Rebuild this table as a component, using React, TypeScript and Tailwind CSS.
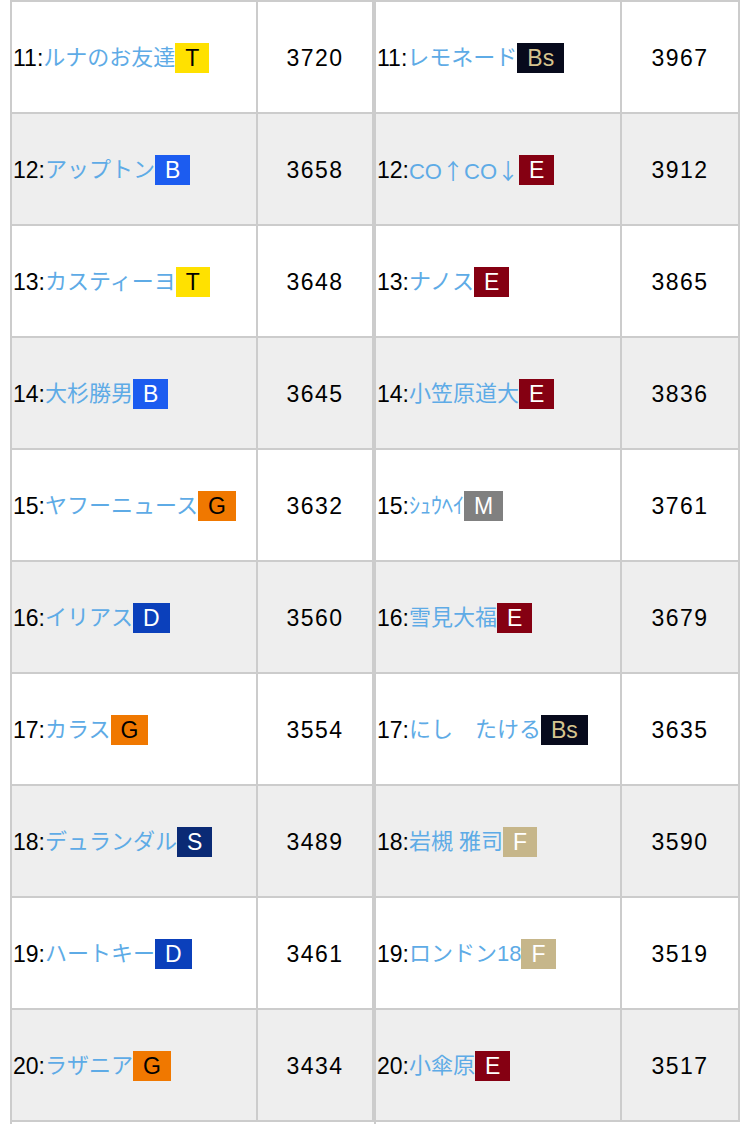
import React from 'react';

type Team = 'T' | 'Bs' | 'B' | 'E' | 'D' | 'G' | 'S' | 'M' | 'F';

interface Entry {
  rank: number;
  name: string;
  team: Team;
  score: number;
}

const TEAM_STYLES: Record<Team, string> = {
  T: 'bg-[#ffe100] text-black',
  Bs: 'bg-[#070a1c] text-[#d6c48f]',
  B: 'bg-[#1c5cf0] text-white',
  E: 'bg-[#850012] text-white',
  D: 'bg-[#0b40bb] text-white',
  G: 'bg-[#f07800] text-black',
  S: 'bg-[#0a2a75] text-white',
  M: 'bg-[#808080] text-white',
  F: 'bg-[#c6b68a] text-white',
};

const LEFT: Entry[] = [
  { rank: 11, name: 'ルナのお友達', team: 'T', score: 3720 },
  { rank: 12, name: 'アップトン', team: 'B', score: 3658 },
  { rank: 13, name: 'カスティーヨ', team: 'T', score: 3648 },
  { rank: 14, name: '大杉勝男', team: 'B', score: 3645 },
  { rank: 15, name: 'ヤフーニュース', team: 'G', score: 3632 },
  { rank: 16, name: 'イリアス', team: 'D', score: 3560 },
  { rank: 17, name: 'カラス', team: 'G', score: 3554 },
  { rank: 18, name: 'デュランダル', team: 'S', score: 3489 },
  { rank: 19, name: 'ハートキー', team: 'D', score: 3461 },
  { rank: 20, name: 'ラザニア', team: 'G', score: 3434 },
];

const RIGHT: Entry[] = [
  { rank: 11, name: 'レモネード', team: 'Bs', score: 3967 },
  { rank: 12, name: 'CO↑CO↓', team: 'E', score: 3912 },
  { rank: 13, name: 'ナノス', team: 'E', score: 3865 },
  { rank: 14, name: '小笠原道大', team: 'E', score: 3836 },
  { rank: 15, name: 'ｼｭｳﾍｲ', team: 'M', score: 3761 },
  { rank: 16, name: '雪見大福', team: 'E', score: 3679 },
  { rank: 17, name: 'にし　たける', team: 'Bs', score: 3635 },
  { rank: 18, name: '岩槻 雅司', team: 'F', score: 3590 },
  { rank: 19, name: 'ロンドン18', team: 'F', score: 3519 },
  { rank: 20, name: '小傘原', team: 'E', score: 3517 },
];

// arrows come out tiny in Liberation Sans, so send them to the CJK font
const renderName = (name: string) =>
  name.split(/([↑↓])/).map((part, i) =>
    part === '↑' || part === '↓' ? (
      <span key={i} className="font-['Noto_Sans_CJK_JP',sans-serif]">{part}</span>
    ) : (
      part
    ),
  );

const RankTable = ({ rows, scoreWidth }: { rows: Entry[]; scoreWidth: string }) => (
  <div className="border-l-2 border-t-2 border-[#cccccc]">
    {rows.map((row, i) => (
      <div key={row.rank} className={`flex h-[112px] ${i % 2 === 1 ? 'bg-[#eeeeee]' : 'bg-white'}`}>
        <div className="flex w-[246px] items-center whitespace-nowrap border-b-2 border-r-2 border-[#cccccc] pl-[1px] pt-[2px]">
          <span className="text-black">{row.rank}:</span>
          <span className="text-[22px] text-[#5eabe6]">{renderName(row.name)}</span>
          <span className={`inline-flex h-[30px] items-center px-[10px] ${TEAM_STYLES[row.team]}`}>{row.team}</span>
        </div>
        <div className={`flex ${scoreWidth} items-center justify-center border-b-2 border-r-2 border-[#cccccc] pt-[2px] tracking-[1.5px] text-black`}>
          {row.score}
        </div>
      </div>
    ))}
  </div>
);

export default function App() {
  return (
    <div className="flex min-h-screen bg-white pl-[10px] font-['Liberation_Sans','Noto_Sans_CJK_JP',sans-serif] text-[23px] leading-none">
      <RankTable rows={LEFT} scoreWidth="w-[116px]" />
      <RankTable rows={RIGHT} scoreWidth="w-[118px]" />
    </div>
  );
}
